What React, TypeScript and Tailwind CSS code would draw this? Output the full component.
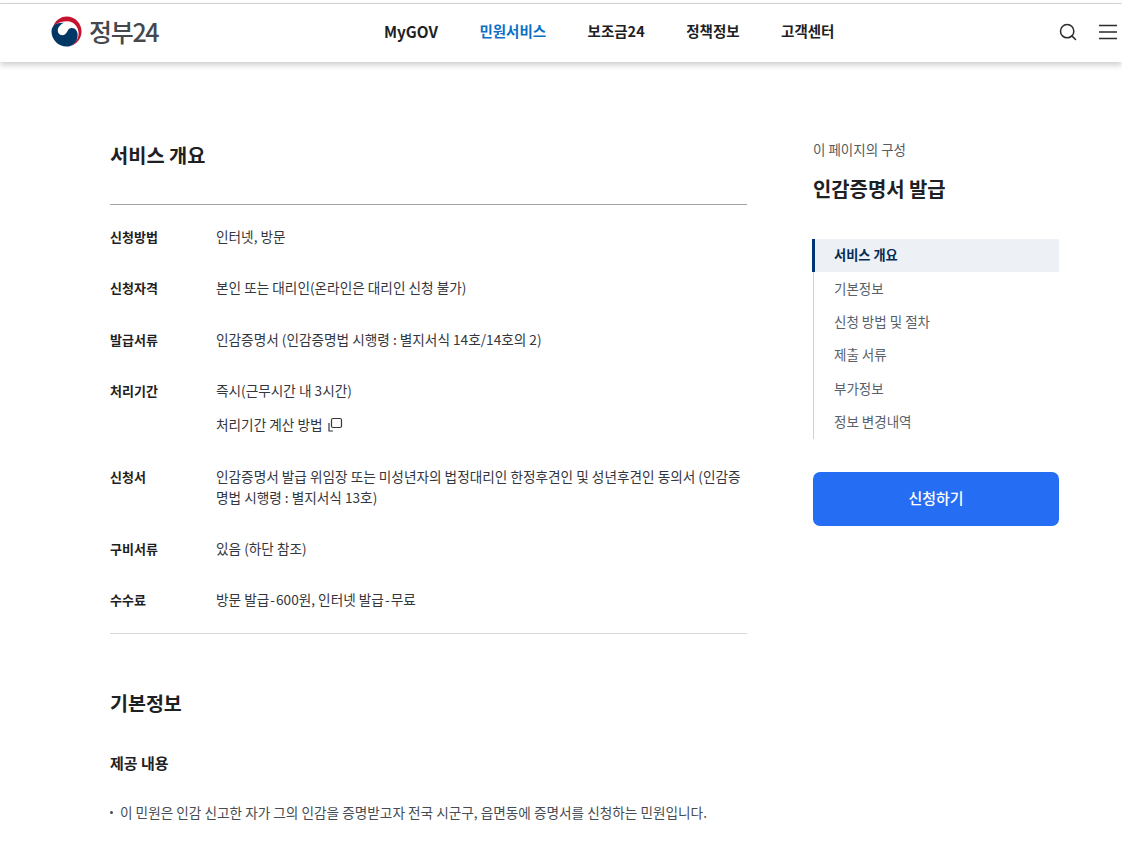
import React from "react";
import { Search } from "lucide-react";

const font = "font-['Noto_Sans_CJK_KR','Noto_Sans',sans-serif]";

function Logo() {
  return (
    <svg width="31" height="31" viewBox="0 0 32 32" aria-hidden="true">
      <path d="M2.500 10C5 4 10.500 .5 16 .5 25 .5 31.500 7.500 31.500 16 31.500 23 27 28.500 20.500 31 25.500 27.500 28.500 23 28.500 18 28.500 11 23 5.500 17 5.500 12 5.500 7 7 2.500 10Z" fill="#c4122f" />
      <path d="M3 9.500C1.300 11.500 .5 13.500 .5 16 .5 24.500 7.500 31.500 16 31.500 22.500 31.500 27.500 26.500 27.500 19.500 27.500 15.500 25 12.500 21.500 12.500 19 12.500 17.800 14.200 16.800 16 15.500 18.300 14 19.800 11.500 19.800 8.800 19.800 7 17.500 7 15 7 11.500 10 8.500 13.500 7 9.500 6.800 6 7.500 3 9.500Z" fill="#003764" />
    </svg>
  );
}

function Row({ label, children, className = "" }: { label: string; children: React.ReactNode; className?: string }) {
  return (
    <div className={`flex ${className}`}>
      <div className="w-[106px] shrink-0 text-[13px] font-bold leading-[21px] text-[#1e2124]">{label}</div>
      <div className="flex-1 break-all text-[13.65px] leading-[21px] text-[#33363d]">{children}</div>
    </div>
  );
}

const toc = ["기본정보", "신청 방법 및 절차", "제출 서류", "부가정보", "정보 변경내역"];

export default function App() {
  return (
    <div className={`${font} h-[861px] overflow-hidden bg-white`}>
      <div className="h-[4px] border-b border-[#d9d9d9] bg-white" />
      <header className="flex h-[58px] items-center bg-white pb-[4px] pl-[51px] pr-[5px] shadow-[0_3px_6px_rgba(0,0,0,0.2)]">
        <div className="flex w-[300px] items-center gap-[7px]">
          <Logo />
          <span className="text-[25px] font-medium leading-none tracking-[-1.3px] text-[#45484d]">정부24</span>
        </div>
        <nav className="ml-[33px] flex items-center gap-[41.5px] text-[14.5px] font-bold text-[#1e2124]">
          <span className="text-[15.3px]">MyGOV</span>
          <span className="text-[#0b6fc6]">민원서비스</span>
          <span>보조금24</span>
          <span>정책정보</span>
          <span>고객센터</span>
        </nav>
        <div className="ml-auto mt-[2px] flex items-center gap-[21px] text-[#2b2b2b]">
          <Search size={20} strokeWidth={1.8} />
          <svg width="18" height="16" viewBox="0 0 18 16" aria-hidden="true">
            <path d="M0 1.500H18M0 8H18M0 14.500H18" stroke="#2b2b2b" strokeWidth="1.600" />
          </svg>
        </div>
      </header>

      <main className="flex pl-[110px] pt-[78px]">
        <section className="w-[637px]">
          <h2 className="text-[19.8px] font-bold leading-[30px] text-[#1e2124]">서비스 개요</h2>
          <div className="mt-[34px] border-t border-[#a0a3a8] pb-[23px] pt-[21px]">
            <Row label="신청방법">인터넷, 방문</Row>
            <Row label="신청자격" className="mt-[30px]">본인 또는 대리인(온라인은 대리인 신청 불가)</Row>
            <Row label="발급서류" className="mt-[31px]">인감증명서 (인감증명법 시행령 : 별지서식 14호/14호의 2)</Row>
            <Row label="처리기간" className="mt-[30px]">
              <div>즉시(근무시간 내 3시간)</div>
              <div className="mt-[13px] flex items-center gap-[5px]">
                처리기간 계산 방법
                <svg width="15" height="15" viewBox="0 0 15 15" fill="none" stroke="#33363d" strokeWidth="1.200" aria-hidden="true">
                  <rect x="3.500" y="1.500" width="10" height="9" rx="1.500" />
                  <path d="M1 6v8h4" />
                </svg>
              </div>
            </Row>
            <Row label="신청서" className="mt-[31px]">
              인감증명서 발급 위임장 또는 미성년자의 법정대리인 한정후견인 및 성년후견인 동의서 (인감증명법 시행령 : 별지서식 13호)
            </Row>
            <Row label="구비서류" className="mt-[30px]">있음 (하단 참조)</Row>
            <Row label="수수료" className="mt-[30px]">
              방문 발급<span className="mx-[1px]">-</span>600원, 인터넷 발급<span className="mx-[1px]">-</span>무료
            </Row>
          </div>
          <div className="border-t border-[#d6d8db]" />
          <h2 className="mt-[54px] text-[19.5px] font-bold leading-[30px] text-[#1e2124]">기본정보</h2>
          <h3 className="mt-[34px] text-[15px] font-bold leading-[22px] text-[#1e2124]">제공 내용</h3>
          <p className="mt-[28px] flex items-center gap-[7px] text-[13.65px] leading-[21px] text-[#464c53]">
            <span className="h-[3px] w-[3px] rounded-full bg-[#464c53]" />
            이 민원은 인감 신고한 자가 그의 인감을 증명받고자 전국 시군구, 읍면동에 증명서를 신청하는 민원입니다.
          </p>
        </section>

        <aside className="ml-[66px] w-[246px]">
          <div className="-mt-[1px] text-[13.5px] leading-[20px] text-[#555a60]">이 페이지의 구성</div>
          <div className="mt-[15px] text-[19.9px] font-bold leading-[30px] text-[#1e2124]">인감증명서 발급</div>
          <div className="mt-[35px] border-l border-[#cdd1d5]">
            <div className="-ml-[2px] flex h-[33px] items-center border-l-[3px] border-[#003675] bg-[#edf1f5] pb-[1px] pl-[19px] text-[13.2px] font-bold text-[#052b57]">서비스 개요</div>
            {toc.map((t) => (
              <div key={t} className="flex h-[33.4px] items-center pb-[2px] pl-[20px] text-[13.5px] text-[#58616a]">{t}</div>
            ))}
          </div>
          <button className="mt-[33px] h-[54px] w-full rounded-[7px] bg-[#256ef4] pb-[1px] text-[15px] font-medium text-white">신청하기</button>
        </aside>
      </main>
    </div>
  );
}
